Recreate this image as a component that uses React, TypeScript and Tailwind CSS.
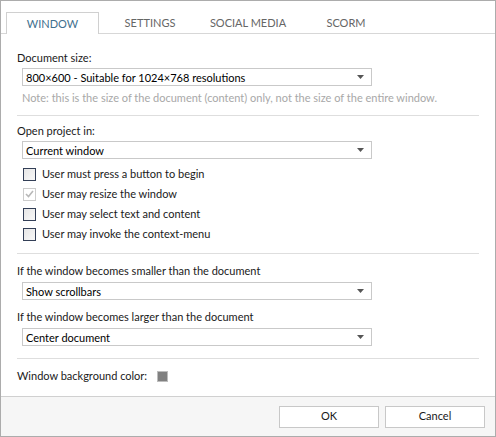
const font = { fontFamily: 'Lato, "Liberation Sans", sans-serif' };

const Select = ({ value }: { value: string }) => (
  <div className="flex h-[18px] w-[350px] items-center justify-between border border-[#c9c9c9] bg-white pl-[3px] pr-[7px] text-[11px] text-[#000]">
    <span className="leading-none">{value}</span>
    <svg width="7" height="4" viewBox="0 0 7 4">
      <path d="M0 0h7L3.5 4z" fill="#555" />
    </svg>
  </div>
);

const Check = ({ label, disabled }: { label: string; disabled?: boolean }) => (
  <div className="flex h-[20px] items-center gap-[6px]">
    <div
      className={
        disabled
          ? "flex h-[13px] w-[13px] items-center justify-center border border-[#cccccc] bg-white"
          : "h-[13px] w-[13px] border border-[#333f57] bg-gradient-to-br from-[#e6e6e6] to-[#f8f8f8]"
      }
    >
      {disabled && (
        <svg width="9" height="8" viewBox="0 0 9 8">
          <path d="M1 4l2.5 2.5L8 1" stroke="#b8b8b8" strokeWidth="1.6" fill="none" />
        </svg>
      )}
    </div>
    <span className="text-[11px] text-[#1a1a1a]">{label}</span>
  </div>
);

const Tab = ({ label, active }: { label: string; active?: boolean }) => (
  <div
    className={
      active
        ? "-mb-px flex h-[22px] w-[93px] items-center justify-center border border-b-0 border-[#d0d0d0] bg-white pt-[2px] text-[11px] text-[#3f6f8e]"
        : "flex h-[21px] w-[98px] items-center justify-center pt-[2px] text-[11px] text-[#666666]"
    }
  >
    {label}
  </div>
);

export default function App() {
  return (
    <div className="flex h-[437px] w-[496px] flex-col overflow-hidden border border-[#acacac] bg-white" style={font}>
      <div className="flex h-[33px] shrink-0 items-end border-b border-[#d7d7d7] pl-[5px]">
        <Tab label="WINDOW" active />
        <div className="w-[2px]" />
        <Tab label="SETTINGS" />
        <Tab label="SOCIAL MEDIA" />
        <Tab label="SCORM" />
      </div>

      <div className="flex flex-1 flex-col px-[16px] pt-[15px] text-[11px] text-[#1a1a1a]">
        <div className="leading-[18px]">Document size:</div>
        <div className="mt-[1px] pl-[5px]">
          <Select value="800×600 - Suitable for 1024×768 resolutions" />
        </div>
        <div className="mt-[3px] whitespace-nowrap pl-[5px] leading-[18px] text-[#a8a8a8]">
          Note: this is the size of the document (content) only, not the size of the entire window.
        </div>
        <div className="mt-[8px] h-px w-[462px] bg-[#dedede]" />

        <div className="mt-[6px] leading-[18px]">Open project in:</div>
        <div className="mt-[1px] pl-[5px]">
          <Select value="Current window" />
        </div>
        <div className="mt-[5px] flex flex-col pl-[6px]">
          <Check label="User must press a button to begin" />
          <Check label="User may resize the window" disabled />
          <Check label="User may select text and content" />
          <Check label="User may invoke the context-menu" />
        </div>
        <div className="mt-[9px] h-px w-[462px] bg-[#dedede]" />

        <div className="mt-[8px] leading-[18px]">If the window becomes smaller than the document</div>
        <div className="mt-[2px] pl-[5px]">
          <Select value="Show scrollbars" />
        </div>
        <div className="mt-[8px] leading-[18px]">If the window becomes larger than the document</div>
        <div className="mt-[2px] pl-[5px]">
          <Select value="Center document" />
        </div>
        <div className="mt-[12px] h-px w-[462px] bg-[#dedede]" />

        <div className="mt-[8px] flex items-center gap-[10px]">
          <span className="leading-[18px]">Window background color:</span>
          <div className="h-[11px] w-[11px] border border-[#bdbdbd] bg-[#808080]" />
        </div>
      </div>

      <div className="flex h-[40px] shrink-0 items-center justify-end gap-[6px] border-t border-[#d0d0d0] bg-[#f6f6f6] pr-[10px]">
        <button className="h-[22px] w-[100px] border border-[#c8c8c8] bg-white text-[11px] text-[#1a1a1a]">OK</button>
        <button className="h-[22px] w-[100px] border border-[#c8c8c8] bg-white text-[11px] text-[#1a1a1a]">Cancel</button>
      </div>
    </div>
  );
}
